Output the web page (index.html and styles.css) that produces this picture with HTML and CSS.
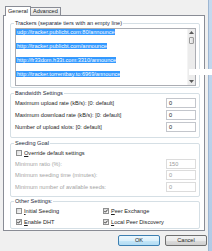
FILE: index.html
```html
<!DOCTYPE html>
<html>
<head>
<meta charset="utf-8">
<link rel="stylesheet" href="styles.css">
</head>
<body>
<div class="window">
  <div class="dialog">
    <div class="tabs">
      <div class="tab active">General</div>
      <div class="tab">Advanced</div>
    </div>
    <div class="panel">
      <div class="group trackers">
        <div class="legend">Trackers (separate tiers with an empty line)</div>
        <div class="list">
          <div class="lines">
            <div class="line"><span>udp://tracker.publicbt.com:80/announce</span></div>
            <div class="line"></div>
            <div class="line"><span>http://tracker.publicbt.com/announce</span></div>
            <div class="line"></div>
            <div class="line"><span>http://fr33dom.h33t.com:3310/announce</span></div>
            <div class="line"></div>
            <div class="line"><span>http://tracker.torrentbay.to:6969/announce</span></div>
            <div class="line"></div>
          </div>
          <div class="scroll">
            <div class="sb-btn"><svg width="5" height="3" viewBox="0 0 5 3"><path d="M0 3 L2.5 0 L5 3 Z" fill="#5a5a5a"/></svg></div>
            <div class="thumb"></div>
            <div class="sb-space"></div>
            <div class="sb-btn"><svg width="5" height="3" viewBox="0 0 5 3"><path d="M0 0 L2.5 3 L5 0 Z" fill="#5a5a5a"/></svg></div>
          </div>
        </div>
      </div>

      <div class="group bandwidth">
        <div class="legend">Bandwidth Settings</div>
        <div class="row"><span>Maximum upload rate (kB/s): [0: default]</span><div class="input">0</div></div>
        <div class="row"><span>Maximum download rate (kB/s): [0: default]</span><div class="input">0</div></div>
        <div class="row"><span>Number of upload slots: [0: default]</span><div class="input">0</div></div>
      </div>

      <div class="group seeding">
        <div class="legend">Seeding Goal</div>
        <div class="row r11"><label class="check"><span class="cb"></span><span><u>O</u>verride default settings</span></label></div>
        <div class="row r11 disabled"><span>Minimum ratio (%):</span><div class="input">150</div></div>
        <div class="row disabled"><span>Minimum seeding time (minutes):</span><div class="input">0</div></div>
        <div class="row disabled"><span>Minimum number of available seeds:</span><div class="input">0</div></div>
      </div>

      <div class="group other">
        <div class="legend">Other Settings:</div>
        <div class="grid">
          <label class="check"><span class="cb"></span><span><u>I</u>nitial Seeding</span></label>
          <label class="check"><span class="cb on"><svg width="4" height="4" viewBox="0 0 4 4"><path d="M0.4 2 L1.5 3.2 L3.6 0.6" fill="none" stroke="#2b2b2b" stroke-width="0.9"/></svg></span><span><u>P</u>eer Exchange</span></label>
          <label class="check"><span class="cb on"><svg width="4" height="4" viewBox="0 0 4 4"><path d="M0.4 2 L1.5 3.2 L3.6 0.6" fill="none" stroke="#2b2b2b" stroke-width="0.9"/></svg></span><span><u>E</u>nable DHT</span></label>
          <label class="check"><span class="cb on"><svg width="4" height="4" viewBox="0 0 4 4"><path d="M0.4 2 L1.5 3.2 L3.6 0.6" fill="none" stroke="#2b2b2b" stroke-width="0.9"/></svg></span><span><u>L</u>ocal Peer Discovery</span></label>
        </div>
      </div>
    </div>
    <div class="buttons">
      <button class="btn default">OK</button>
      <button class="btn">Cancel</button>
    </div>
  </div>
  <div class="frame"></div>
  <div class="glitch"></div>
</div>
</body>
</html>
```

FILE: styles.css
```css
* { box-sizing: border-box; }
html, body { margin: 0; padding: 0; }
body {
  width: 212px;
  height: 251px;
  overflow: hidden;
  background: #f0f0f0;
  font-family: "Liberation Sans", Arial, sans-serif;
  font-size: 5.6px;
  color: #1e1e1e;
}
.window { position: relative; display: flex; height: 251px; }
.dialog { width: 208px; padding: 6px 0 0 3px; display: flex; flex-direction: column; }
.frame {
  width: 4px;
  background: linear-gradient(#c6daef, #b2cae6);
  border-left: 1px solid #9db6d2;
}
.glitch {
  position: absolute;
  left: 189px;
  top: 69px;
  width: 23px;
  height: 6px;
  background: #fff;
}

.tabs { display: flex; align-items: flex-end; height: 9px; padding-left: 2px; }
.tab {
  height: 8px;
  line-height: 7px;
  padding: 0 2px;
  border: 1px solid #898c95;
  border-left: none;
  border-bottom: none;
  background: linear-gradient(#f5f5f5, #e1e1e1);
  white-space: nowrap;
}
.tab.active {
  position: relative;
  z-index: 1;
  height: 10px;
  margin-bottom: -1px;
  padding-top: 1px;
  border-left: 1px solid #898c95;
  background: #fff;
}

.panel {
  width: 202px;
  height: 216px;
  border: 1px solid #898c95;
  background: #fff;
  padding: 7px 4px 0 6px;
}

.group {
  width: 190px;
  border: 1px solid #d5dfe5;
  border-radius: 2px;
  padding: 0 3px 0 4px;
  margin-top: 5px;
}
.legend {
  width: max-content;
  height: 7px;
  line-height: 7px;
  margin: -4px 0 0 -1px;
  padding: 0 1px;
  background: #fff;
  color: #1e2a3a;
}
.trackers { height: 65px; margin-top: 0; }
.bandwidth { height: 45px; }
.seeding { height: 54px; }
.other { height: 28px; margin-top: 4px; }

.list {
  display: flex;
  height: 58px;
  margin-top: 1px;
  border: 1px solid #abadb3;
}
.lines { flex: 1; }
.line { height: 7px; line-height: 7px; white-space: nowrap; }
.line span { background: #3399ff; color: #fff; padding-left: 1px; }

.scroll {
  width: 8px;
  display: flex;
  flex-direction: column;
  background: #ececec;
  border-left: 1px solid #f4f4f4;
}
.sb-btn { height: 7px; display: flex; align-items: center; justify-content: center; }
.thumb {
  height: 7px;
  margin: 1px 1px 0;
  border: 1px solid #9c9c9c;
  border-radius: 1px;
  background: linear-gradient(90deg, #f6f6f6, #dadada);
}
.sb-space { flex: 1; }

.row {
  display: flex;
  align-items: center;
  justify-content: space-between;
  height: 12px;
  white-space: nowrap;
}
.row.r11 { height: 11px; }
.input {
  width: 30px;
  height: 10px;
  line-height: 8px;
  padding-left: 2px;
  border: 1px solid #c3c6cc;
  background: #fff;
}
.disabled { color: #a3a3a3; }
.disabled .input { border-color: #dcdcdc; color: #9a9a9a; }

.check { display: flex; align-items: center; margin-left: 1px; white-space: nowrap; }
.cb {
  width: 6px;
  height: 6px;
  margin-right: 2px;
  border: 1px solid #8e8f8f;
  background: linear-gradient(135deg, #d8d8d8, #fbfbfb);
  display: flex;
  align-items: center;
  justify-content: center;
}
.grid {
  display: grid;
  grid-template-columns: 87px 1fr;
  grid-auto-rows: 11px;
  align-items: center;
}

.buttons {
  display: flex;
  justify-content: flex-end;
  gap: 5px;
  margin-top: 4px;
  padding-right: 1px;
}
.btn {
  width: 42px;
  height: 11px;
  padding: 0;
  font: inherit;
  line-height: 9px;
  color: #1e1e1e;
  border: 1px solid #707070;
  border-radius: 2px;
  background: linear-gradient(#f2f2f2 0%, #ebebeb 50%, #dddddd 50%, #cfcfcf 100%);
}
.btn.default {
  border-color: #3c7fb1;
  background: linear-gradient(#ecf7fd 0%, #dbf0fb 50%, #c4e6f8 50%, #b2dcf3 100%);
}
```
